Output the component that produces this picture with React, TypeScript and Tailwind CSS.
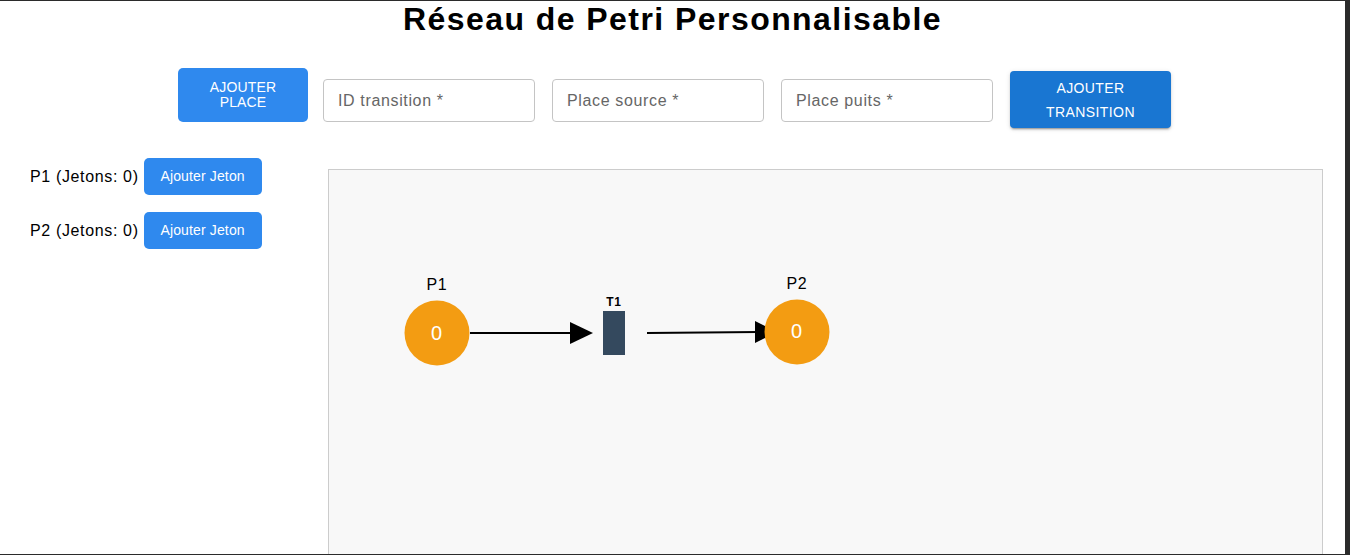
const font = { fontFamily: '"Liberation Sans", Arial, sans-serif' }

function TextInput({ label }: { label: string }) {
  return (
    <input
      placeholder={label}
      className="w-[212px] h-[43px] rounded-[4px] border border-[#c4c4c4] bg-white px-[14px] text-[16px] tracking-[0.04em] text-black placeholder:text-[#666] outline-none"
      style={font}
    />
  )
}

function PlaceRow({ id, tokens }: { id: string; tokens: number }) {
  return (
    <div className="flex items-center h-[37px] mb-[17px]">
      <span className="text-[16px] text-black mr-[5px]">
        {id} (Jetons: {tokens})
      </span>
      <button className="w-[118px] h-[37px] rounded-[5px] bg-[#2f89ee] text-white text-[14px] tracking-[0.01em]">
        Ajouter Jeton
      </button>
    </div>
  )
}

function PetriCanvas() {
  return (
    <div className="w-[995px] h-[420px] mt-[11px] border border-[#cccccc] bg-[#f8f8f8]">
      <svg width="993" height="418" viewBox="0 0 993 418">
        {/* P1 -> T1 */}
        <line x1="141" y1="163" x2="242" y2="163" stroke="#000" strokeWidth="2" />
        <polygon points="241,152 264,163 241,174" fill="#000" />

        {/* T1 -> P2 */}
        <line x1="318" y1="163" x2="430" y2="162" stroke="#000" strokeWidth="2" />
        <polygon points="426,151 448,162 426,173" fill="#000" />

        {/* P1 */}
        <text x="108" y="120" textAnchor="middle" fontSize="16" fill="#000" style={font}>P1</text>
        <circle cx="108" cy="163" r="32.5" fill="#f39c12" />
        <text x="108" y="170" textAnchor="middle" fontSize="20" fill="#fff" style={font}>0</text>

        {/* T1 */}
        <text x="285" y="136" textAnchor="middle" fontSize="12" fontWeight="bold" fill="#000" style={font}>T1</text>
        <rect x="274" y="141" width="22" height="44" fill="#34495e" />

        {/* P2 */}
        <text x="468" y="119" textAnchor="middle" fontSize="16" fill="#000" style={font}>P2</text>
        <circle cx="468" cy="162" r="32.5" fill="#f39c12" />
        <text x="468" y="168" textAnchor="middle" fontSize="20" fill="#fff" style={font}>0</text>
      </svg>
    </div>
  )
}

export default function App() {
  return (
    <div className="h-[555px] w-[1350px] overflow-hidden bg-[#2b2b2b] pt-px pr-[5px] pb-px tracking-[0.04em]" style={font}>
      <div className="h-full bg-white overflow-hidden">
        <h1 className="text-center text-[32px] leading-[37px] font-bold tracking-[0.045em] text-black m-0">
          Réseau de Petri Personnalisable
        </h1>

        <div className="flex items-start pl-[178px] mt-[30px]">
          <button className="w-[130px] h-[54px] rounded-[5px] bg-[#2f89ee] text-white text-[14px] leading-[15px] tracking-[0.01em] uppercase">
            Ajouter
            <br />
            Place
          </button>
          <div className="ml-[15px] mt-[11px]">
            <TextInput label="ID transition *" />
          </div>
          <div className="ml-[17px] mt-[11px]">
            <TextInput label="Place source *" />
          </div>
          <div className="ml-[17px] mt-[11px]">
            <TextInput label="Place puits *" />
          </div>
          <button className="ml-[17px] mt-[3px] w-[161px] h-[57px] rounded-[4px] bg-[#1976d2] text-white text-[14px] leading-[24px] tracking-[0.4px] uppercase shadow-[0_3px_1px_-2px_rgba(0,0,0,0.2),0_2px_2px_0_rgba(0,0,0,0.14),0_1px_5px_0_rgba(0,0,0,0.12)]">
            Ajouter
            <br />
            Transition
          </button>
        </div>

        <div className="flex mt-[30px]">
          <div className="w-[328px] pl-[30px]">
            <PlaceRow id="P1" tokens={0} />
            <PlaceRow id="P2" tokens={0} />
          </div>
          <PetriCanvas />
        </div>
      </div>
    </div>
  )
}
